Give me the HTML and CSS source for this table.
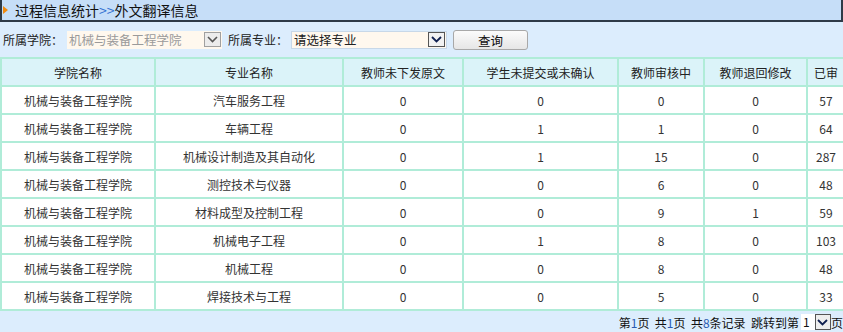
FILE: index.html
```html
<!DOCTYPE html>
<html lang="zh">
<head>
<meta charset="utf-8">
<link rel="stylesheet" href="styles.css">
</head>
<body>
<div class="titlebar"><span class="tri"></span><span class="title">过程信息统计<span class="sep">&gt;&gt;</span>外文翻译信息</span></div>
<div class="filters">
  <span class="lbl">所属学院：</span>
  <span class="sel sel1"><span class="val dis">机械与装备工程学院</span><span class="arrow"><svg width="11" height="7" viewBox="0 0 11 7"><path d="M1 1 L5.5 5.5 L10 1" fill="none" stroke="#555" stroke-width="1.6"/></svg></span></span>
  <span class="lbl lbl2">所属专业：</span>
  <span class="sel sel2"><span class="val">请选择专业</span><span class="arrow dark"><svg width="11" height="7" viewBox="0 0 11 7"><path d="M1 1 L5.5 5.5 L10 1" fill="none" stroke="#102050" stroke-width="1.8"/></svg></span></span>
  <button class="btn">查询</button>
</div>
<table class="grid">
  <colgroup><col style="width:154px"><col style="width:188px"><col style="width:120px"><col style="width:155px"><col style="width:86px"><col style="width:103px"><col></colgroup>
  <thead>
    <tr><th>学院名称</th><th>专业名称</th><th>教师未下发原文</th><th>学生未提交或未确认</th><th>教师审核中</th><th>教师退回修改</th><th>已审</th></tr>
  </thead>
  <tbody>
    <tr><td>机械与装备工程学院</td><td>汽车服务工程</td><td>0</td><td>0</td><td>0</td><td>0</td><td>57</td></tr>
    <tr><td>机械与装备工程学院</td><td>车辆工程</td><td>0</td><td>1</td><td>1</td><td>0</td><td>64</td></tr>
    <tr><td>机械与装备工程学院</td><td>机械设计制造及其自动化</td><td>0</td><td>1</td><td>15</td><td>0</td><td>287</td></tr>
    <tr><td>机械与装备工程学院</td><td>测控技术与仪器</td><td>0</td><td>0</td><td>6</td><td>0</td><td>48</td></tr>
    <tr><td>机械与装备工程学院</td><td>材料成型及控制工程</td><td>0</td><td>0</td><td>9</td><td>1</td><td>59</td></tr>
    <tr><td>机械与装备工程学院</td><td>机械电子工程</td><td>0</td><td>1</td><td>8</td><td>0</td><td>103</td></tr>
    <tr><td>机械与装备工程学院</td><td>机械工程</td><td>0</td><td>0</td><td>8</td><td>0</td><td>48</td></tr>
    <tr><td>机械与装备工程学院</td><td>焊接技术与工程</td><td>0</td><td>0</td><td>5</td><td>0</td><td>33</td></tr>
  </tbody>
</table>
<div class="pager">第<span class="n">1</span>页&nbsp; 共<span class="n">1</span>页&nbsp; 共<span class="n">8</span>条记录&nbsp; 跳转到第<span class="psel"><span class="pval">1</span><span class="parrow"><svg width="11" height="7" viewBox="0 0 11 7"><path d="M1 1 L5.5 5.5 L10 1" fill="none" stroke="#102050" stroke-width="1.8"/></svg></span></span>页</div>
</body>
</html>
```

FILE: styles.css
```css
html, body {
  margin: 0;
  padding: 0;
}
body {
  width: 843px;
  height: 332px;
  overflow: hidden;
  background: #dcedfd;
  font-family: "Noto Sans CJK SC", "Noto Sans", sans-serif;
  font-size: 12px;
  color: #222;
}
.titlebar {
  box-sizing: border-box;
  width: 843px;
  height: 22px;
  background: #c6def8;
  border-left: 2px solid #2f3b48;
  border-right: 2px solid #2f3b48;
  border-bottom: 2px solid #2f3b48;
  display: flex;
  align-items: center;
}
.tri {
  width: 0;
  height: 0;
  border-top: 4px solid transparent;
  border-bottom: 4px solid transparent;
  border-left: 5px solid #f08a10;
  margin-left: 1px;
  margin-right: 7px;
}
.title {
  font-size: 14px;
  line-height: 20px;
  color: #111;
}
.sep {
  color: #2f6fd0;
}
.filters {
  height: 35px;
  display: flex;
  align-items: center;
  padding-left: 3px;
  box-sizing: border-box;
}
.lbl {
  font-size: 12px;
  margin-right: 4px;
}
.lbl2 {
  margin-left: 6px;
  margin-right: 3px;
}
.sel {
  display: flex;
  align-items: center;
  height: 18px;
  background: #fff8ee;
  box-sizing: border-box;
}
.sel1 {
  width: 155px;
}
.sel2 {
  width: 156px;
  border: 1px solid #c8d8e8;
}
.val {
  flex: 1;
  padding-left: 2px;
  font-size: 12.5px;
  line-height: 18px;
  white-space: nowrap;
}
.dis {
  color: #9a9a9a;
}
.arrow {
  width: 17px;
  height: 15px;
  box-sizing: border-box;
  border: 1px solid #a0a0a0;
  background: #ececec;
  display: flex;
  align-items: center;
  justify-content: center;
  margin-right: 1px;
}
.arrow.dark {
  border-color: #555;
  background: #f2f2f2;
}
.btn {
  margin-left: 6px;
  width: 75px;
  height: 20px;
  padding: 0;
  border: 1px solid #a8a8a8;
  border-radius: 3px;
  background: linear-gradient(#fbfbfb, #e6e6e6);
  font-family: "Noto Sans CJK SC", "Noto Sans", sans-serif;
  font-size: 12.5px;
  color: #111;
}
.grid {
  border-collapse: collapse;
  table-layout: fixed;
  width: 846px;
}
.grid th, .grid td {
  border: 2px solid #b0ecd8;
  text-align: center;
  font-size: 12px;
  padding: 0;
  white-space: nowrap;
  overflow: hidden;
}
.grid th {
  background: #dbf3f9;
  font-weight: normal;
  height: 26px;
  color: #222;
}
.grid td {
  background: #ffffff;
  height: 26px;
  color: #333;
}
.pager {
  display: flex;
  justify-content: flex-end;
  align-items: center;
  height: 22px;
  font-size: 12px;
  color: #111;
}
.n {
  color: #2a5ab0;
}
.psel {
  display: inline-flex;
  align-items: center;
  height: 16px;
  background: #fff;
  margin-left: 2px;
}
.pval {
  width: 12px;
  padding-left: 2px;
  line-height: 16px;
}
.parrow {
  width: 16px;
  height: 16px;
  box-sizing: border-box;
  border: 1px solid #555;
  background: #eee;
  display: flex;
  align-items: center;
  justify-content: center;
}
```
